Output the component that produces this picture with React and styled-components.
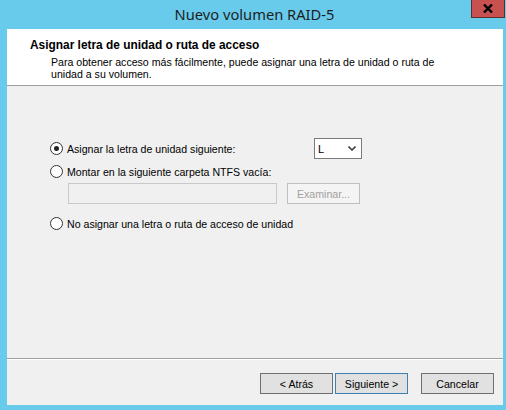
import React from "react";
import styled, { createGlobalStyle } from "styled-components";

const GlobalStyle = createGlobalStyle`
  html, body {
    margin: 0;
    padding: 0;
  }
  body {
    width: 506px;
    height: 410px;
    overflow: hidden;
    font-family: "Liberation Sans", Arial, sans-serif;
    font-size: 10.6px;
    color: #000;
  }
`;

const Frame = styled.div`
  display: flex;
  flex-direction: column;
  width: 506px;
  height: 410px;
  box-sizing: border-box;
  background: #68cbeb;
  padding: 0 3px 5px 7px;
`;

const TitleBar = styled.div`
  display: grid;
  grid-template-columns: 1fr auto 1fr;
  height: 29px;
  margin-left: -7px;
  margin-right: -3px;
`;

const Caption = styled.div`
  grid-column: 2;
  align-self: center;
  font-family: "Noto Sans", "Open Sans", sans-serif;
  font-size: 14.7px;
  color: #1e1e1e;
  padding: 0 0 1px 3px;
`;

const CloseButton = styled.div`
  grid-column: 3;
  justify-self: end;
  align-self: start;
  display: flex;
  align-items: center;
  justify-content: center;
  width: 32px;
  height: 17px;
  margin-right: 1px;
  background: #c75050;
  border: 1px solid #5e2e2a;
  border-top: none;
  box-sizing: content-box;
`;

const Panel = styled.div`
  flex: 1;
  display: flex;
  flex-direction: column;
  background: #f0f0f0;
`;

const Header = styled.div`
  height: 57px;
  box-sizing: border-box;
  background: #fff;
  border-bottom: 1px solid #a0a0a0;
  padding: 10px 0 0 23px;
`;

const HeaderTitle = styled.div`
  font-weight: bold;
  font-size: 11.9px;
  line-height: 13px;
  height: 14px;
`;

const HeaderText = styled.div`
  padding-left: 21px;
  line-height: 12px;
  width: 400px;
  margin-top: 3px;
`;

const Body = styled.div`
  flex: 1;
  display: flex;
  flex-direction: column;
  padding: 52px 0 0 43px;
  border-bottom: 1px solid #a0a0a0;
`;

const OptionRow = styled.div`
  display: flex;
  align-items: center;
  height: ${(p) => p.h || 21}px;
  margin-top: ${(p) => p.mt || 0}px;
`;

const Radio = styled.span`
  position: relative;
  width: 11px;
  height: 11px;
  border: 1px solid #333;
  border-radius: 50%;
  background: #fff;
  flex: none;
  margin-right: 4px;
  &::after {
    content: "";
    display: ${(p) => (p.checked ? "block" : "none")};
    position: absolute;
    left: 3px;
    top: 3px;
    width: 5px;
    height: 5px;
    border-radius: 50%;
    background: #222;
  }
`;

const Label = styled.span`
  flex: 1;
`;

const Combo = styled.div`
  display: flex;
  align-items: center;
  justify-content: space-between;
  width: 48px;
  height: 21px;
  box-sizing: border-box;
  margin-right: 141px;
  background: #fff;
  border: 1px solid #7a7a7a;
  padding: 0 5px 0 3px;
  font-size: 11px;
`;

const PathRow = styled.div`
  display: flex;
  align-items: center;
  gap: 10px;
  padding-left: 18px;
  margin-top: 5px;
`;

const PathInput = styled.div`
  width: 209px;
  height: 21px;
  box-sizing: border-box;
  background: #f0f0f0;
  border: 1px solid #c8c8c8;
`;

const Button = styled.div`
  display: flex;
  align-items: center;
  justify-content: center;
  width: 73px;
  height: 21px;
  box-sizing: border-box;
  background: ${(p) => (p.disabled ? "#f4f4f4" : "#e1e1e1")};
  border: 1px solid
    ${(p) => (p.disabled ? "#bfbfbf" : p.primary ? "#3c7fb1" : "#707070")};
  color: ${(p) => (p.disabled ? "#a0a0a0" : "#000")};
`;

const Footer = styled.div`
  height: 46px;
  box-sizing: border-box;
  border-top: 1px solid #fff;
  display: flex;
  align-items: flex-start;
  justify-content: flex-end;
  padding: 13px 9px 0 0;
`;

const ButtonGap = styled.div`
  width: ${(p) => p.w}px;
`;

const Chevron = () => (
  <svg width="8" height="5" viewBox="0 0 8 5">
    <path d="M0.5 0.5 L4 4 L7.5 0.5" fill="none" stroke="#444" strokeWidth="1.6" />
  </svg>
);

const CloseGlyph = () => (
  <svg width="10" height="9" viewBox="0 0 10 9">
    <path d="M1 0.5 L9 8.5 M9 0.5 L1 8.5" stroke="#000" strokeWidth="2.4" />
  </svg>
);

export default function App() {
  return (
    <>
      <GlobalStyle />
      <Frame>
        <TitleBar>
          <Caption>Nuevo volumen RAID-5</Caption>
          <CloseButton>
            <CloseGlyph />
          </CloseButton>
        </TitleBar>
        <Panel>
          <Header>
            <HeaderTitle>Asignar letra de unidad o ruta de acceso</HeaderTitle>
            <HeaderText>
              Para obtener acceso más fácilmente, puede asignar una letra de unidad o ruta de
              unidad a su volumen.
            </HeaderText>
          </Header>
          <Body>
            <OptionRow>
              <Radio checked />
              <Label>Asignar la letra de unidad siguiente:</Label>
              <Combo>
                <span>L</span>
                <Chevron />
              </Combo>
            </OptionRow>
            <OptionRow h={13} mt={6}>
              <Radio />
              <Label>Montar en la siguiente carpeta NTFS vacía:</Label>
            </OptionRow>
            <PathRow>
              <PathInput />
              <Button disabled>Examinar...</Button>
            </PathRow>
            <OptionRow h={13} mt={13}>
              <Radio />
              <Label>No asignar una letra o ruta de acceso de unidad</Label>
            </OptionRow>
          </Body>
          <Footer>
            <Button>&lt; Atrás</Button>
            <ButtonGap w={2} />
            <Button primary>Siguiente &gt;</Button>
            <ButtonGap w={13} />
            <Button>Cancelar</Button>
          </Footer>
        </Panel>
      </Frame>
    </>
  );
}
